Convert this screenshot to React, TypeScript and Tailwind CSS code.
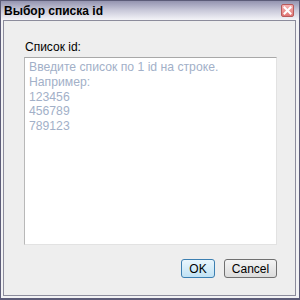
import React from "react";

export default function App() {
  const font = { fontFamily: '"Liberation Sans", Arial, sans-serif' };
  return (
    <div
      className="w-[300px] h-[300px] flex flex-col bg-[#f2f2f4] border border-[#5c5c78] border-b-2"
      style={font}
    >
      <div className="h-[19px] shrink-0 flex items-center justify-between pl-[3px] pr-[5px] bg-gradient-to-b from-[#9494b0] via-[#cacada] to-[#f4f4f8]">
        <span className="text-[12px] font-bold text-black leading-none">Выбор списка id</span>
        <div className="w-[13px] h-[13px] rounded-[2px] border border-[#b85a5a] bg-gradient-to-b from-[#f6b4b4] to-[#e07474] flex items-center justify-center">
          <svg width="9" height="9" viewBox="0 0 9 9">
            <path d="M1.5 1.5 L7.5 7.5 M7.5 1.5 L1.5 7.5" stroke="#ffffff" strokeWidth="2" strokeLinecap="square" />
          </svg>
        </div>
      </div>
      <div className="flex-1 flex flex-col pl-[2px] pr-[3px] pb-[3px]">
        <div className="flex-1 flex flex-col border border-[#8c8c9c] bg-[#eeeeee] pl-[20px] pr-[18px] pt-[19px] pb-[17px]">
          <div className="text-[12px] leading-[14px] text-black pl-[1px]">Список id:</div>
          <textarea
            className="mt-[3px] h-[188px] resize-none bg-white border border-t-[#a8a8a8] border-l-[#b8b8b8] border-r-[#e2e2e2] border-b-[#e2e2e2] pl-[4px] pt-[2px] text-[12.2px] leading-[14.75px] outline-none placeholder:text-[#a2b0c8]"
            style={font}
            placeholder={"Введите список по 1 id на строке.\nНапример:\n123456\n456789\n789123"}
          />
          <div className="mt-[14px] flex justify-end gap-[9px]">
            <button className="w-[34px] h-[19px] rounded-[3px] border border-[#3c7fb1] bg-gradient-to-b from-[#eaf6fd] to-[#c0e2f4] text-[12px] leading-none text-black">
              OK
            </button>
            <button className="w-[53px] h-[19px] rounded-[3px] border border-[#707070] bg-gradient-to-b from-[#f4f4f4] to-[#dcdcdc] text-[12px] leading-none text-black">
              Cancel
            </button>
          </div>
        </div>
      </div>
    </div>
  );
}
